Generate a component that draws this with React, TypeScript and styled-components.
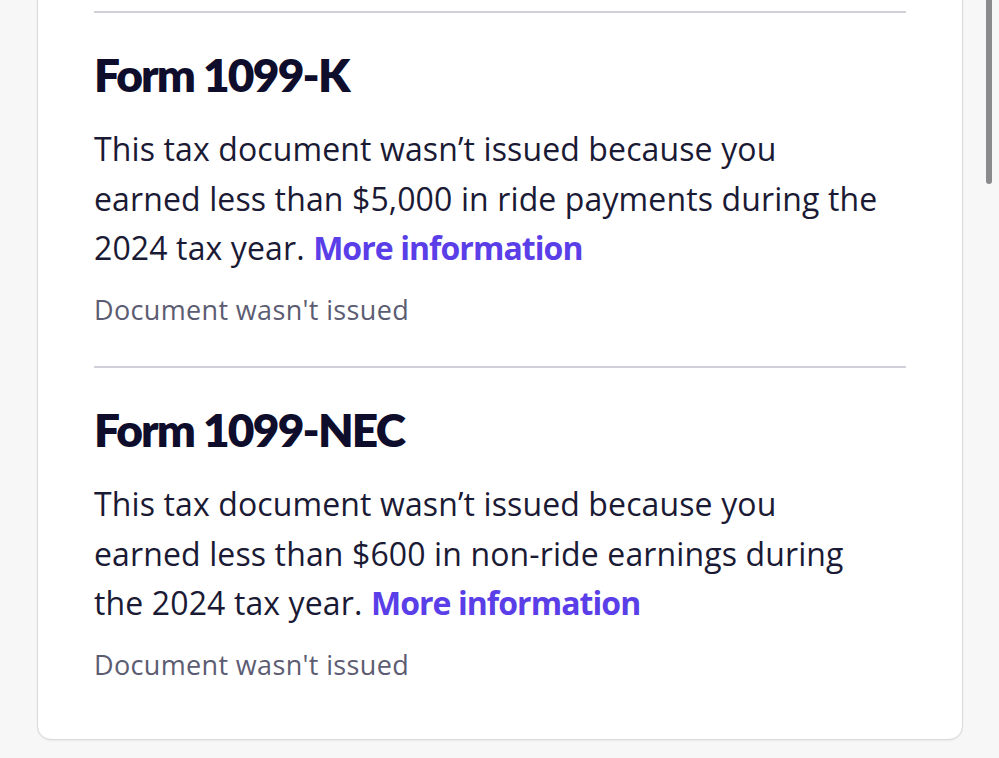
import React, { ReactElement } from 'react'
import styled, { createGlobalStyle } from 'styled-components';

interface TaxDoc {
  title: string,
  text: string,
  status: string
}

const docs: TaxDoc[] = [
  {
    title: 'Form 1099-K',
    text: 'This tax document wasn’t issued because you earned less than $5,000 in ride payments during the 2024 tax year.',
    status: "Document wasn't issued",
  },
  {
    title: 'Form 1099-NEC',
    text: 'This tax document wasn’t issued because you earned less than $600 in non-ride earnings during the 2024 tax year.',
    status: "Document wasn't issued",
  },
];

const GlobalStyle = createGlobalStyle`
  html, body {
    margin: 0;
    padding: 0;
    background: #f7f7f8;
    overflow: hidden;
  }
  body {
    font-family: "Open Sans", "Noto Sans", sans-serif;
  }
`;

const Page = styled.div`
  position: relative;
  height: 758px;
  overflow: hidden;
  padding: 0 36px 0 37px;
`;

const Card = styled.div`
  margin-top: -40px;
  background: #ffffff;
  border: 1px solid #d9d9de;
  border-radius: 14px;
  box-shadow: 0 1px 2px rgba(0, 0, 0, 0.06);
  padding: 50px 56px 56px;
`;

const Section = styled.section`
  display: flex;
  flex-direction: column;
`;

const Divider = styled.hr`
  margin: 0;
  border: 0;
  height: 2px;
  background: #d0d0da;
`;

const Title = styled.h2`
  margin: 34px 0 0;
  font-family: Lato, "Open Sans", sans-serif;
  font-size: 46px;
  line-height: 1.2;
  font-weight: 800;
  color: #0e0d2c;
  letter-spacing: -1.8px;
`;

const Body = styled.p`
  margin: 22px 0 0;
  font-size: 32px;
  line-height: 49.5px;
  letter-spacing: 0.12px;
  color: #1b1a35;
  max-width: 790px;
`;

const Link = styled.a`
  color: #5a3ee8;
  font-weight: 700;
  letter-spacing: -0.95px;
  text-decoration: none;
`;

const Status = styled.div<{ $last?: boolean }>`
  margin: 19px 0 ${p => (p.$last ? 0 : 38)}px;
  font-size: 27px;
  line-height: 36.4px;
  letter-spacing: 0.35px;
  color: #5c5c72;
`;

const Scrollbar = styled.div`
  position: absolute;
  top: 0;
  right: 7px;
  width: 6px;
  height: 184px;
  border-radius: 0 0 3px 3px;
  background: #8a8a8c;
`;

export default function App(): ReactElement {
  return (
    <>
      <GlobalStyle />
      <Page>
        <Card>
          {docs.map(({ title, text, status }, i) => (
            <Section key={title}>
              <Divider />
              <Title>{title}</Title>
              <Body>
                {text} <Link href="#">More information</Link>
              </Body>
              <Status $last={i === docs.length - 1}>{status}</Status>
            </Section>
          ))}
        </Card>
        <Scrollbar />
      </Page>
    </>
  )
}
